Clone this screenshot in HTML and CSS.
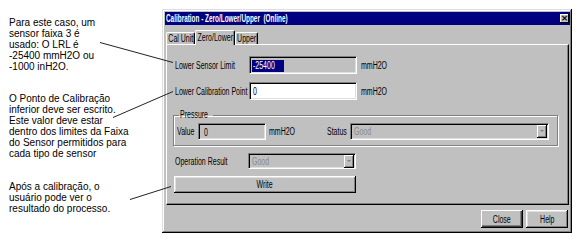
FILE: index.html
```html
<!DOCTYPE html>
<html lang="pt">
<head>
<meta charset="utf-8">
<title>Calibration - Zero/Lower/Upper</title>
<link rel="stylesheet" href="styles.css">
</head>
<body>
<div class="page">
  <div class="notes">
    <p class="note n1">Para este caso, um<br>sensor faixa 3 é<br>usado: O LRL é<br>-25400 mmH2O ou<br>-1000 inH2O.</p>
    <p class="note n2">O Ponto de Calibração<br>inferior deve ser escrito.<br>Este valor deve estar<br>dentro dos limites da Faixa<br>do Sensor permitidos para<br>cada tipo de sensor</p>
    <p class="note n3">Após a calibração, o<br>usuário pode ver o<br>resultado do processo.</p>
  </div>
  <div class="dialog">
    <div class="titlebar">
      <span class="t title">Calibration - Zero/Lower/Upper&nbsp; (Online)</span>
      <span class="xbtn">×</span>
    </div>
    <div class="tabs">
      <span class="tab w1"><span class="t c">Cal Unit</span></span>
      <span class="tab w2 active"><span class="t c">Zero/Lower</span></span>
      <span class="tab w3"><span class="t c">Upper</span></span>
    </div>
    <div class="panel">
      <div class="row r1">
        <span class="label"><span class="t">Lower Sensor Limit</span></span>
        <span class="field ro wide"><span class="sel"><span class="t">-25400</span></span></span>
        <span class="unit"><span class="t">mmH2O</span></span>
      </div>
      <div class="row r2">
        <span class="label"><span class="t">Lower Calibration Point</span></span>
        <span class="field white wide"><span class="t">0</span></span>
        <span class="unit"><span class="t">mmH2O</span></span>
      </div>
      <fieldset class="group">
        <legend><span class="t">Pressure</span></legend>
        <div class="grow">
          <span class="glabel"><span class="t">Value</span></span>
          <span class="field ro small"><span class="t">0</span></span>
          <span class="gunit"><span class="t">mmH2O</span></span>
          <span class="slabel"><span class="t">Status</span></span>
          <span class="combo status-combo"><span class="ctext"><span class="t">Good</span></span><span class="arrow"></span></span>
        </div>
      </fieldset>
      <div class="row r3">
        <span class="label oplabel"><span class="t">Operation Result</span></span>
        <span class="combo op-combo"><span class="ctext"><span class="t">Good</span></span><span class="arrow"></span></span>
      </div>
      <div class="btnrow"><span class="btn write"><span class="t c">Write</span></span></div>
    </div>
    <div class="footer">
      <span class="btn fbtn default"><span class="t c">Close</span></span>
      <span class="btn fbtn"><span class="t c">Help</span></span>
    </div>
  </div>
  <svg class="leaders" width="588" height="247" viewBox="0 0 588 247">
    <line x1="100" y1="42.5" x2="173" y2="62.5"/>
    <line x1="113" y1="117.5" x2="173" y2="91.5"/>
    <line x1="130" y1="199.5" x2="171" y2="186.5"/>
  </svg>
</div>
</body>
</html>
```
FILE: styles.css
```css
html, body {
  margin: 0;
  padding: 0;
  background: #ffffff;
}
.page {
  position: relative;
  width: 588px;
  height: 247px;
  display: flex;
  overflow: hidden;
}
.notes {
  width: 153px;
  padding-left: 9px;
  font-family: "Liberation Sans", Arial, sans-serif;
  font-size: 10px;
  line-height: 11px;
  color: #000;
}
.note { margin: 0; }
.n1 { margin-top: 17px; }
.n2 { margin-top: 21px; }
.n3 { margin-top: 22px; }

.dialog {
  margin-top: 9px;
  width: 410px;
  height: 224px;
  flex-shrink: 0;
  box-sizing: border-box;
  padding: 3px 2px 2px 3px;
  background: #c0c0c0;
  box-shadow: inset -1px -1px #000, inset 1px 1px #dfdfdf, inset -2px -2px #808080, inset 2px 2px #fff;
  font-family: "Liberation Sans", Arial, sans-serif;
  font-size: 10px;
  color: #000;
  display: flex;
  flex-direction: column;
}
/* condensed dialog text */
.t {
  display: inline-block;
  white-space: pre;
  transform: scaleX(0.7);
  transform-origin: 0 50%;
}
.t.c { transform-origin: 50% 50%; }

.titlebar {
  height: 13px;
  background: #000080;
  display: flex;
  align-items: center;
  justify-content: space-between;
  padding: 0 1px 0 1px;
  overflow: hidden;
}
.title {
  color: #fff;
  font-weight: bold;
  font-size: 10px;
  transform: scaleX(0.64);
}
.xbtn {
  width: 9px;
  height: 9px;
  flex-shrink: 0;
  background: #c0c0c0;
  box-shadow: inset -1px -1px #000, inset 1px 1px #fff;
  font-size: 9px;
  line-height: 9px;
  text-align: center;
  font-weight: bold;
  font-family: "DejaVu Sans", sans-serif;
}
.tabs {
  display: flex;
  align-items: flex-end;
  margin-top: 5px;
  padding-left: 1px;
  height: 14px;
  position: relative;
  z-index: 1;
}
.tab {
  box-sizing: border-box;
  height: 12px;
  line-height: 11px;
  display: flex;
  justify-content: center;
  border: 1px solid #fff;
  border-right-color: #000;
  border-bottom: none;
  border-radius: 2px 2px 0 0;
  box-shadow: inset -1px 0 #808080;
  overflow: visible;
}
.w1 { width: 29px; }
.w2 { width: 40px; }
.w3 { width: 23px; }
.tab.active {
  height: 15px;
  line-height: 13px;
  background: #c0c0c0;
  margin-bottom: -1px;
}
.panel {
  margin: 0 1px 0 1px;
  height: 161px;
  box-sizing: border-box;
  border: 1px solid #fff;
  border-right-color: #000;
  border-bottom-color: #000;
  box-shadow: inset -1px -1px #808080;
  padding: 11px 0 0 8px;
  display: flex;
  flex-direction: column;
}
.row {
  display: flex;
  align-items: center;
  height: 18px;
}
.r2 { margin-top: 8px; }
.label, .glabel, .gunit, .slabel, .unit {
  flex: none;
  min-width: 0;
  overflow: visible;
  white-space: nowrap;
}
.label { width: 74px; }
.unit { margin-left: 4px; }
.field {
  flex: none;
  box-sizing: border-box;
  height: 18px;
  border: 1px solid;
  border-color: #808080 #fff #fff #808080;
  box-shadow: inset 1px 1px #000, inset -1px -1px #dfdfdf;
  padding: 2px 3px 0 3px;
  line-height: 13px;
  overflow: hidden;
}
.field.wide { width: 108px; }
.field.white { background: #fff; }
.field.ro { background: #c0c0c0; }
.sel {
  display: inline-block;
  width: 31px;
  background: #000080;
  color: #fff;
  margin-left: -1px;
  padding-left: 1px;
  line-height: 12px;
}
.group {
  margin: 10px 0 0 -2px;
  padding: 0 0 0 3px;
  width: 385px;
  height: 36px;
  box-sizing: border-box;
  border: 1px solid #808080;
  box-shadow: inset 1px 1px #fff, 1px 1px #fff;
  min-width: 0;
}
.group legend {
  width: 32px;
  padding: 0 1px;
  margin-left: 2px;
  line-height: 10px;
  white-space: nowrap;
  overflow: visible;
}
.grow {
  display: flex;
  align-items: center;
  height: 20px;
  margin-top: 1px;
}
.glabel { width: 21px; }
.field.small { width: 68px; height: 17px; padding-left: 5px; }
.gunit { width: 58px; margin-left: 3px; }
.slabel { width: 23px; }
.combo {
  flex: none;
  box-sizing: border-box;
  height: 17px;
  border: 1px solid;
  border-color: #808080 #fff #fff #808080;
  box-shadow: inset 1px 1px #000, inset -1px -1px #dfdfdf;
  display: flex;
  align-items: center;
  justify-content: space-between;
  padding: 0 1px 0 3px;
  color: #8a8a8a;
}
.status-combo { width: 199px; }
.op-combo { width: 108px; height: 16px; }
.oplabel { width: 73px; }
.r3 { margin-top: 7px; height: 16px; }
.arrow {
  flex: none;
  width: 10px;
  height: 13px;
  box-sizing: border-box;
  background: #c0c0c0;
  box-shadow: inset -1px -1px #000, inset 1px 1px #fff, inset -2px -2px #808080;
  position: relative;
}
.arrow::after {
  content: "";
  position: absolute;
  left: 3px;
  top: 5px;
  border-left: 2px solid transparent;
  border-right: 2px solid transparent;
  border-top: 2px solid #808080;
}
.btnrow { margin-top: 7px; display: flex; }
.btn {
  box-sizing: border-box;
  display: flex;
  align-items: center;
  justify-content: center;
  background: #c0c0c0;
  box-shadow: inset -1px -1px #000, inset 1px 1px #fff, inset -2px -2px #808080, inset 2px 2px #dfdfdf;
}
.write {
  width: 182px;
  height: 17px;
  margin-left: -1px;
}
.footer {
  display: flex;
  justify-content: flex-end;
  gap: 3px;
  margin-top: 5px;
  padding-right: 2px;
}
.fbtn { width: 42px; height: 18px; }
.fbtn.default { box-shadow: inset -1px -1px #000, inset 1px 1px #fff, inset -2px -2px #404040, inset -3px -3px #808080; }
.leaders {
  position: absolute;
  left: 0;
  top: 0;
  pointer-events: none;
}
.leaders line {
  stroke: #222;
  stroke-width: 1;
}
```
